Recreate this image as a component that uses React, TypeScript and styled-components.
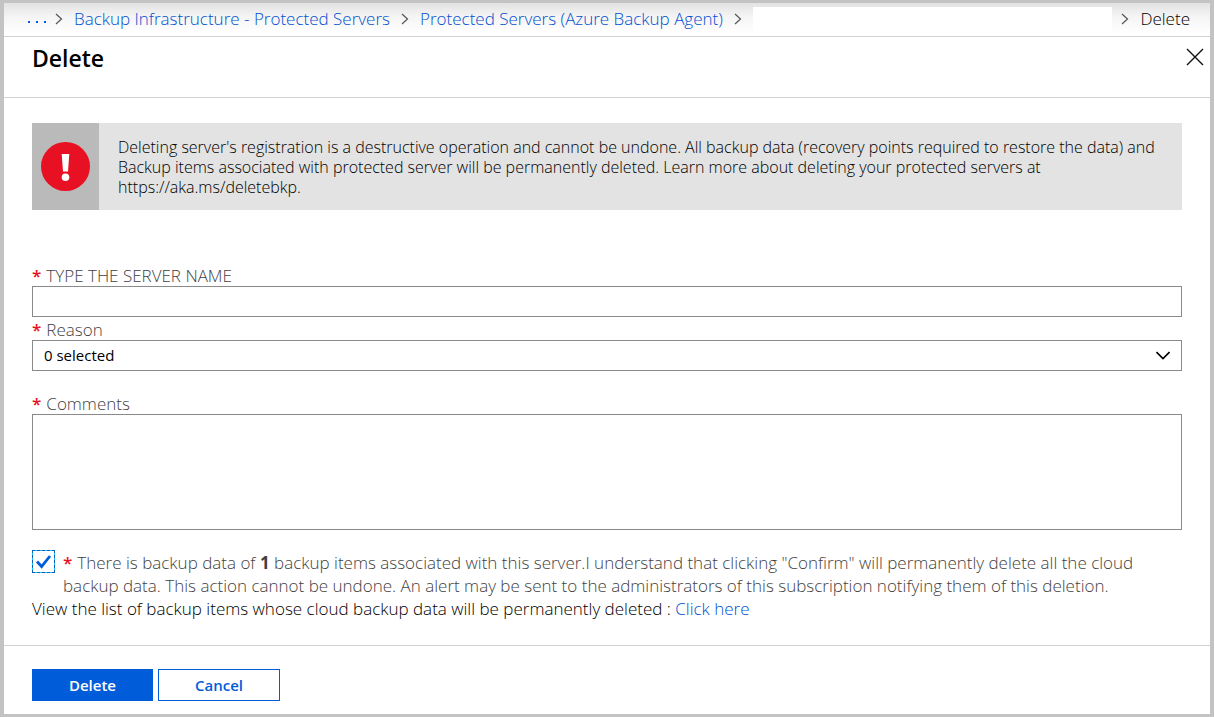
import React, { useState } from "react";
import styled, { createGlobalStyle, css } from "styled-components";

const blue = "#015cda";
const linkBlue = "#0050d0";
const red = "#e81123";
const line = "#d2d2d2";
const labelGray = "#3f3f3f";

const GlobalStyle = createGlobalStyle`
  *, *::before, *::after { box-sizing: border-box; }
  body {
    margin: 0;
    background: #ffffff;
    color: #000000;
    font-family: "Segoe UI", "Open Sans", "Noto Sans", sans-serif;
    font-size: 17px;
    font-weight: 300;
    line-height: 23px;
  }
  button, input, select, textarea { font: inherit; color: inherit; }
`;

const Blade = styled.div`
  min-height: 100vh;
  display: flex;
  flex-direction: column;
  border: solid #c3c3c3;
  border-width: 3px 4px;
`;

const Breadcrumb = styled.nav`
  display: flex;
  align-items: center;
  height: 34px;
  padding: 0 20px 2px 24px;
  border-bottom: 1px solid ${line};
  background: linear-gradient(#e2e2e2, #f4f4f4 40%, #ffffff 90%);
  white-space: nowrap;
`;

const Separator = styled.svg`
  flex: none;
  width: 8px;
  height: 12px;
  margin: 0 11px;
  fill: none;
  stroke: #555555;
`;

const Link = styled.a`
  color: ${linkBlue};
  text-decoration: none;
`;

const Ellipsis = styled(Link)`
  display: flex;
  gap: 6px;
  padding-top: 7px;
  margin-right: -2px;

  i {
    width: 2px;
    height: 2px;
    background: ${blue};
  }
`;

const HiddenName = styled.span`
  flex: 1;
  height: 24px;
  margin-right: -2px;
  background: #ffffff;
`;

const Header = styled.header`
  display: flex;
  align-items: flex-start;
  justify-content: space-between;
  height: 61px;
  padding: 6px 6px 0 28px;
  border-bottom: 1px solid ${line};
`;

const Title = styled.h1`
  margin: 0;
  font-size: 23px;
  font-weight: 600;
  line-height: 31px;
`;

const CloseButton = styled.button`
  display: flex;
  margin-top: 5px;
  padding: 0;
  border: 0;
  background: none;
  cursor: pointer;
`;

const Main = styled.main`
  flex: 1;
  padding: 25px 28px 20px;
`;

const Alert = styled.section`
  display: flex;
  min-height: 87px;
  margin-bottom: 55px;
  background: #e3e3e3;
`;

const AlertIcon = styled.div`
  flex: none;
  display: flex;
  align-items: center;
  justify-content: center;
  width: 67px;
  background: #bababa;
`;

const AlertText = styled.p`
  margin: 0;
  padding: 14px 19px 13px;
  font-size: 16px;
  line-height: 20px;
`;

const Label = styled.label`
  display: block;
  height: 21px;
  line-height: 21px;
  color: ${labelGray};
`;

const Star = styled.span`
  margin-right: 5px;
  color: ${red};
  font-weight: 600;
`;

const control = css`
  display: block;
  width: 100%;
  border: 1px solid #8a8a8a;
  border-radius: 0;
  background: #ffffff;
  outline: 0;
`;

const TextInput = styled.input`
  ${control}
  height: 31px;
  margin-bottom: 2px;
  padding: 0 11px;
`;

const SelectBox = styled.div`
  position: relative;
  margin-bottom: 22px;

  svg {
    position: absolute;
    right: 12px;
    top: 11px;
    pointer-events: none;
  }
`;

const Select = styled.select`
  ${control}
  height: 31px;
  padding: 0 11px;
  appearance: none;
  font-size: 15px;
  font-weight: 400;
`;

const Comments = styled.textarea`
  ${control}
  height: 116px;
  margin-bottom: 20px;
  padding: 6px 11px;
  resize: none;
`;

const Consent = styled.div`
  display: flex;
  gap: 8px;

  label {
    padding-top: 1px;
    color: ${labelGray};
  }
  b { font-weight: 700; }
`;

const CheckBox = styled.span`
  position: relative;
  flex: none;
  width: 23px;
  height: 23px;

  input {
    appearance: none;
    display: block;
    width: 23px;
    height: 23px;
    margin: 0;
    border: 1px dashed #0a5fb0;
    background: linear-gradient(#ffffff, #ffffff) padding-box, #12c4ff border-box;
  }
  svg {
    position: absolute;
    inset: 0;
    pointer-events: none;
  }
`;

const ListNote = styled.p`
  margin: 0;
`;

const Footer = styled.footer`
  display: flex;
  gap: 5px;
  padding: 23px 28px 13px;
  border-top: 1px solid ${line};
`;

const ActionButton = styled.button<{ $primary?: boolean }>`
  width: ${(p) => (p.$primary ? 121 : 122)}px;
  height: 32px;
  padding: 0;
  border: 1px solid ${blue};
  background: ${(p) => (p.$primary ? blue : "#ffffff")};
  color: ${(p) => (p.$primary ? "#ffffff" : blue)};
  font-size: 15px;
  font-weight: 600;
  line-height: 20px;
  cursor: pointer;
`;

const Chevron = () => (
  <Separator viewBox="0 0 8 12" aria-hidden="true">
    <path d="M1 1l5.5 5L1 11" strokeWidth="1.2" />
  </Separator>
);

export default function App() {
  const [agreed, setAgreed] = useState(true);

  return (
    <>
      <GlobalStyle />
      <Blade>
        <Breadcrumb aria-label="Breadcrumb">
          <Ellipsis href="#" aria-label="Show all"><i /><i /><i /></Ellipsis>
          <Chevron />
          <Link href="#">Backup Infrastructure - Protected Servers</Link>
          <Chevron />
          <Link href="#">Protected Servers (Azure Backup Agent)</Link>
          <Chevron />
          <HiddenName />
          <Chevron />
          <span>Delete</span>
        </Breadcrumb>

        <Header>
          <Title>Delete</Title>
          <CloseButton type="button" aria-label="Close">
            <svg width="18" height="18" viewBox="0 0 18 18" fill="none" stroke="#111111" strokeWidth="1.4">
              <path d="M1 1l16 16M17 1L1 17" />
            </svg>
          </CloseButton>
        </Header>

        <Main>
          <Alert role="alert">
            <AlertIcon>
              <svg width="49" height="49" viewBox="0 0 49 49" aria-hidden="true">
                <circle cx="24.5" cy="24.5" r="24.5" fill={red} />
                <path d="M20.7 12h7.6l-1.3 17.5h-5z" fill="#ffffff" />
                <circle cx="24.5" cy="35.2" r="3.8" fill="#ffffff" />
              </svg>
            </AlertIcon>
            <AlertText>
              Deleting server's registration is a destructive operation and cannot be undone. All backup
              data (recovery points required to restore the data) and Backup items associated with
              protected server will be permanently deleted. Learn more about deleting your protected
              servers at https://aka.ms/deletebkp.
            </AlertText>
          </Alert>

          <Label htmlFor="server"><Star>*</Star>TYPE THE SERVER NAME</Label>
          <TextInput id="server" type="text" />

          <Label htmlFor="reason"><Star>*</Star>Reason</Label>
          <SelectBox>
            <Select id="reason">
              <option>0 selected</option>
            </Select>
            <svg width="14" height="9" viewBox="0 0 14 9" fill="none" stroke="#000000" strokeWidth="1.6" aria-hidden="true">
              <path d="M0.5 1L7 7.5L13.5 1" />
            </svg>
          </SelectBox>

          <Label htmlFor="comments"><Star>*</Star>Comments</Label>
          <Comments id="comments" />

          <Consent>
            <CheckBox>
              <input id="agree" type="checkbox" checked={agreed} onChange={(e) => setAgreed(e.target.checked)} />
              {agreed && (
                <svg width="23" height="23" viewBox="0 0 23 23" fill="none" stroke={blue} strokeWidth="2.8" aria-hidden="true">
                  <path d="M5 11.5l4.6 5L18 6" />
                </svg>
              )}
            </CheckBox>
            <label htmlFor="agree">
              <Star>*</Star>There is backup data of <b>1</b> backup items associated with this server.I
              understand that clicking "Confirm" will permanently delete all the cloud backup data. This
              action cannot be undone. An alert may be sent to the administrators of this subscription
              notifying them of this deletion.
            </label>
          </Consent>
          <ListNote>
            View the list of backup items whose cloud backup data will be permanently deleted :{" "}
            <Link href="#">Click here</Link>
          </ListNote>
        </Main>

        <Footer>
          <ActionButton type="button" $primary>Delete</ActionButton>
          <ActionButton type="button">Cancel</ActionButton>
        </Footer>
      </Blade>
    </>
  );
}
